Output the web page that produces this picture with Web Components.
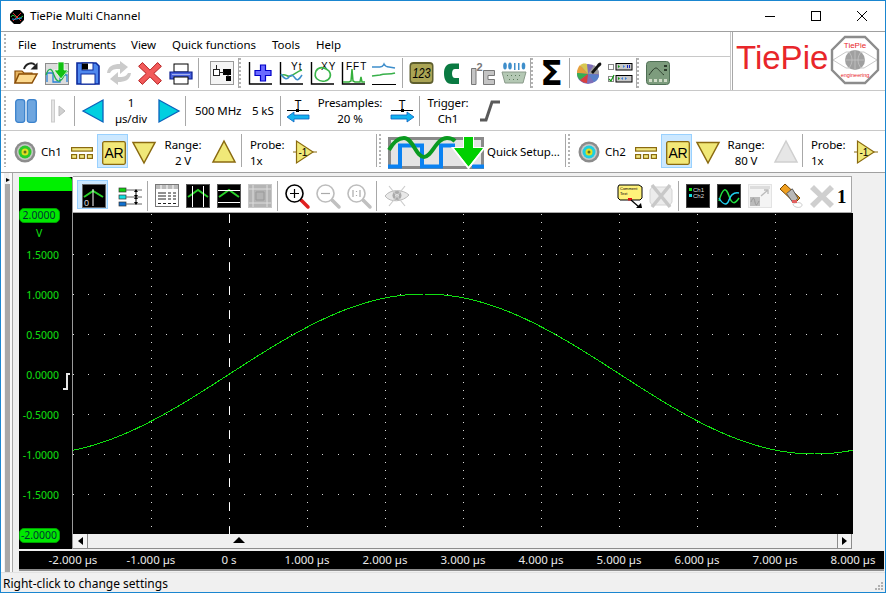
<!DOCTYPE html>
<html>
<head>
<meta charset="utf-8">
<title>TiePie Multi Channel</title>
<style>
    html, body { margin: 0; padding: 0; background: #f0f0f0; }
    body { font: 11.5px/16px "Noto Sans", "Liberation Sans", sans-serif; color: #000; }
</style>
</head>
<body>
<tp-window>
    <tp-titlebar>TiePie Multi Channel</tp-titlebar>
    <tp-header>
        <tp-menu slot="menu">
            <span style="width:34px">File</span><span style="width:79px;letter-spacing:-.25px">Instruments</span><span style="width:41px">View</span><span style="width:100px">Quick functions</span><span style="width:44px">Tools</span><span>Help</span>
        </tp-menu>
        <tp-row slot="tools" h="33" style="padding-bottom:1px">
            <tp-grip></tp-grip>
            <tp-tools style="margin-left:8px">
                <tp-icon name="open"></tp-icon><tp-icon name="load"></tp-icon><tp-icon name="save"></tp-icon><tp-icon name="refresh"></tp-icon><tp-icon name="cross"></tp-icon><tp-icon name="print"></tp-icon>
            </tp-tools>
            <tp-sep style="margin-left:5px"></tp-sep>
            <tp-icon name="tree" style="margin-left:11px"></tp-icon>
            <tp-sep style="margin-left:4px"></tp-sep>
            <tp-grip></tp-grip>
            <tp-tools style="margin-left:7px">
                <tp-icon name="plus"></tp-icon><tp-icon name="yt"></tp-icon><tp-icon name="xy"></tp-icon><tp-icon name="fft"></tp-icon><tp-icon name="meas"></tp-icon>
            </tp-tools>
            <tp-sep style="margin-left:6px"></tp-sep>
            <tp-tools style="margin-left:6px">
                <tp-icon name="digits"></tp-icon><tp-icon name="can"></tp-icon><tp-icon name="i2c"></tp-icon><tp-icon name="serial"></tp-icon>
            </tp-tools>
            <tp-sep style="margin-left:4px"></tp-sep>
            <tp-grip></tp-grip>
            <tp-icon name="sigma" style="margin-left:7px"></tp-icon>
            <tp-sep style="margin-left:5px"></tp-sep>
            <tp-tools style="margin-left:7px">
                <tp-icon name="palette"></tp-icon><tp-icon name="checks"></tp-icon>
            </tp-tools>
            <tp-sep style="margin-left:4px"></tp-sep>
            <tp-grip></tp-grip>
            <tp-icon name="panel" style="margin-left:7px"></tp-icon>
        </tp-row>
    </tp-header>

    <tp-row h="40" line style="padding-top:1px">
        <tp-grip></tp-grip>
        <tp-icon name="pause" w="22" style="margin-left:9px"></tp-icon>
        <tp-icon name="step" w="14" style="margin-left:14px"></tp-icon>
        <tp-sep style="margin-left:9px"></tp-sep>
        <tp-icon name="left" w="22" style="margin-left:7px"></tp-icon>
        <tp-field w="54" center><span>1</span><span>µs/div</span></tp-field>
        <tp-icon name="right" w="22"></tp-icon>
        <tp-sep style="margin-left:5px"></tp-sep>
        <tp-field w="50" style="margin-left:9px"><span>500 MHz</span></tp-field>
        <tp-field w="24" style="margin-left:7px"><span>5 kS</span></tp-field>
        <tp-sep style="margin-left:4px"></tp-sep>
        <tp-icon name="tleft" style="margin-left:6px"></tp-icon>
        <tp-field w="66" center style="margin-left:6px"><span>Presamples:</span><span>20 %</span></tp-field>
        <tp-icon name="tright" style="margin-left:7px"></tp-icon>
        <tp-sep style="margin-left:5px"></tp-sep>
        <tp-field w="40" center style="margin-left:8px"><span>Trigger:</span><span>Ch1</span></tp-field>
        <tp-icon name="slope" w="22" style="margin-left:11px"></tp-icon>
    </tp-row>

    <tp-row h="42" line style="padding-top:3px;--sep-h:33px;--sep-mb:5px">
        <tp-grip></tp-grip>
        <tp-icon name="bnc1" w="22" style="margin-left:8px"></tp-icon>
        <tp-field w="21" style="margin-left:5px;margin-bottom:2px"><span>Ch1</span></tp-field>
        <tp-icon name="bars" w="22" style="margin-left:9px"></tp-icon>
        <tp-hot style="margin-left:4px;margin-bottom:4px"><tp-icon name="ar"></tp-icon></tp-hot>
        <tp-icon name="down" style="margin-left:4px"></tp-icon>
        <tp-field w="38" center style="margin-left:8px"><span>Range:</span><span>2 V</span></tp-field>
        <tp-icon name="up" style="margin-left:10px"></tp-icon>
        <tp-sep style="margin-left:5px"></tp-sep>
        <tp-field w="36" style="margin-left:8px"><span>Probe:</span><span>1x</span></tp-field>
        <tp-icon name="probe" style="margin-left:7px"></tp-icon>
        <tp-sep style="margin-left:59px"></tp-sep>
        <tp-grip style="margin-left:2px"></tp-grip>
        <tp-icon name="quick" w="96" h="32" style="margin-left:7px"></tp-icon>
        <tp-field w="76" style="margin-left:3px;margin-bottom:2px"><span>Quick Setup...</span></tp-field>
        <tp-sep style="margin-left:2px"></tp-sep>
        <tp-grip style="margin-left:2px"></tp-grip>
        <tp-icon name="bnc2" w="22" style="margin-left:8px"></tp-icon>
        <tp-field w="21" style="margin-left:5px;margin-bottom:2px"><span>Ch2</span></tp-field>
        <tp-icon name="bars" w="22" style="margin-left:9px"></tp-icon>
        <tp-hot style="margin-left:4px;margin-bottom:4px"><tp-icon name="ar"></tp-icon></tp-hot>
        <tp-icon name="down" style="margin-left:4px"></tp-icon>
        <tp-field w="38" center style="margin-left:7px"><span>Range:</span><span>80 V</span></tp-field>
        <tp-icon name="upoff" style="margin-left:9px"></tp-icon>
        <tp-sep style="margin-left:4px"></tp-sep>
        <tp-field w="36" style="margin-left:8px"><span>Probe:</span><span>1x</span></tp-field>
        <tp-icon name="probe" style="margin-left:7px"></tp-icon>
    </tp-row>

    <tp-main>
        <tp-splitter slot="strip"></tp-splitter>
        <tp-scope>
            <tp-yaxis slot="yaxis"></tp-yaxis>
            <tp-scopebar slot="bar">
                <tp-hot style="margin-left:4px;align-self:flex-start;--hot-h:29px;--hot-pb:0px"><tp-icon name="tzero"></tp-icon></tp-hot>
                <tp-icon name="legend" style="margin-left:10px"></tp-icon>
                <tp-sep style="margin-left:5px"></tp-sep>
                <tp-tools style="margin-left:7px">
                    <tp-icon name="table"></tp-icon><tp-icon name="vcur"></tp-icon><tp-icon name="hcur"></tp-icon><tp-icon name="fit"></tp-icon>
                </tp-tools>
                <tp-sep style="margin-left:5px"></tp-sep>
                <tp-tools style="margin-left:7px">
                    <tp-icon name="zoomin"></tp-icon><tp-icon name="zoomout"></tp-icon><tp-icon name="zoomone"></tp-icon>
                </tp-tools>
                <tp-sep style="margin-left:5px"></tp-sep>
                <tp-icon name="eye" style="margin-left:8px"></tp-icon>
                <tp-icon name="comment" style="margin-left:auto"></tp-icon>
                <tp-icon name="nocomment" style="margin-left:7px"></tp-icon>
                <tp-sep style="margin-left:5px"></tp-sep>
                <tp-tools style="margin-left:7px">
                    <tp-icon name="chans"></tp-icon><tp-icon name="waves"></tp-icon><tp-icon name="popout"></tp-icon><tp-icon name="eraser"></tp-icon><tp-icon name="grayx"></tp-icon>
                </tp-tools>
                <tp-tag>1</tp-tag>
            </tp-scopebar>
            <tp-plot slot="plot"></tp-plot>
            <tp-scroll slot="scroll"></tp-scroll>
            <tp-xaxis slot="xaxis"></tp-xaxis>
        </tp-scope>
    </tp-main>
    <tp-status>Right-click to change settings</tp-status>
</tp-window>

<script>
const FRAME = '<path d="M1.5 1v22H24" fill="none" stroke="#000" stroke-width="1.4"/>';
const TINY = 'font-family="Liberation Sans"';

// all drawn on a 24 box unless the tag says otherwise
const ICONS = {
    open: `<path d="M1 22V10h7l2 2h8v3" fill="#e6b562" stroke="#8a4d06" stroke-width="1.2"/><path d="M1 22l4-9h18l-5 9z" fill="#fcd98e" stroke="#8a4d06" stroke-width="1.5"/><path d="M10 8C12 2 18 1 21 4" fill="none" stroke="#222" stroke-width="2"/><path d="M23.5 1.500v7h-7z" fill="#222"/>`,
    load: `<rect x=".5" y="2.500" width="23" height="21" fill="#dcdcdc" stroke="#8c8c8c"/><path d="M2 21v-9h6v9h7v-7h7v7" fill="none" stroke="#2a80d8" stroke-width="1.300"/><path d="M1 14C4 5 7 8 9 14s5 8 8 4 3-7 6-8" fill="none" stroke="#20b050" stroke-width="1.300"/><path d="M13 1h6v8h4l-7 9-7-9h4z" fill="#12c012" stroke="#fff" stroke-width=".7"/>`,
    save: `<path d="M1 2h19l3 3v18H1z" fill="#4f88ee" stroke="#0c2a9c" stroke-width="1.600"/><rect x="6" y="2" width="11" height="7" fill="#fff" stroke="#0c2a9c"/><rect x="6" y="2.500" width="6" height="6" fill="#000"/><rect x="5" y="13" width="14" height="10" fill="#fff" stroke="#0c2a9c"/>`,
    refresh: `<path d="M0 12C1 5 6 3 13 3V0l8 6-8 7V8C8 8 5 8 3 12zM24 12c-1 7-6 9-13 9v3l-8-6 8-7v5c5 0 8 0 10-4z" fill="#cbcbcb"/>`,
    cross: `<path d="M4 1l8 8 8-8 4 4-8 7.500 8 7.500-4 4-8-8-8 8-4-4 8-7.500L0 5z" fill="#f25a5a" stroke="#b01818" transform="translate(.6 .6) scale(.95)"/>`,
    print: `<rect x="5" y="3" width="14" height="8" fill="#fff" stroke="#000"/><path d="M1 11h22v7H1z" fill="#4a62dc" stroke="#0b1f90" stroke-width="1.200"/><rect x="5" y="16" width="14" height="7" fill="#fff" stroke="#000"/><rect x="3" y="13" width="18" height="1" fill="#fff" opacity=".5"/>`,
    tree: `<rect x=".5" y=".5" width="23" height="23" fill="#f4f4f4" stroke="#999"/><rect x="3.500" y="8.500" width="6" height="6" fill="#fff" stroke="#222"/><rect x="13" y="8" width="8" height="6" fill="#000"/><rect x="16" y="15" width="5" height="5" fill="#000"/><path d="M9 11.500h5M6.500 4v4M18 14v2" stroke="#222"/>`,
    plus: `${FRAME}<path d="M12.500 4h5v5.500H23v5h-5.500V20h-5v-5.500H7v-5h5.500z" fill="#6a6aff" stroke="#0000c8" stroke-width="1.200"/>`,
    yt: `${FRAME}<text x="12" y="9" font-size="10" ${TINY} letter-spacing="1">Yt</text><path d="M2 15c4-4 6 2 10 0s7-5 11-6" fill="none" stroke="#3cb04a" stroke-width="1.500"/><path d="M2 13c3 5 6 6 8 3s4-2 6 1 4 2 7-3" fill="none" stroke="#3e8ecb" stroke-width="1.500"/>`,
    xy: `${FRAME}<text x="11" y="9" font-size="10" ${TINY} letter-spacing="1">XY</text><path d="M6 10c3-5 9-4 13 0 3 4 1 9-4 10-6 1-12-3-9-10z" fill="none" stroke="#3ab54a" stroke-width="1.600"/>`,
    fft: `${FRAME}<text x="5" y="9" font-size="10" ${TINY} letter-spacing="1">FFT</text><path d="M2 21h6l2-1 1-12 1 12 2 1h5l1-5 1 5h3" fill="none" stroke="#36b03c" stroke-width="1.500"/>`,
    meas: `<path d="M0 6h8c3 0 3-1 4-3 1 2 2 3 5 3l6 1" fill="none" stroke="#3e8ecb" stroke-width="1.500"/><path d="M0 15l8-1c5-2 9 0 15-2" fill="none" stroke="#38b04a" stroke-width="1.500"/><path d="M0 23.500h24" stroke="#000"/>`,
    digits: `<rect x=".5" y="1" width="24" height="22" rx="4" fill="#5e5e2e"/><rect x="2" y="3" width="21" height="18" rx="2" fill="#aaa454"/><text x="12.500" y="17" text-anchor="middle" font-size="14" font-style="italic" ${TINY} textLength="18" lengthAdjust="spacingAndGlyphs">123</text>`,
    can: `<path d="M19 2.500h-7C6 2.500 4 7 4 12.500S6 23 12 23h7v-6h-4c-2 0-3-2-3-4.500s1-4.500 3-4.500h4z" fill="#0a7a42"/>`,
    i2c: `<path d="M.5 7.500h4.500v16H.5zM12.500 9.500h11v5h-6.500v4h6.500v5h-11z" fill="#c4c4c4" stroke="#777"/><text x="5.500" y="10" font-size="11" font-weight="bold" fill="#777" ${TINY}>2</text>`,
    serial: `<g fill="#3e8ecb"><ellipse cx="3" cy="5" rx="1.800" ry="3.500"/><ellipse cx="8" cy="5" rx="1.800" ry="3.500"/><rect x="12" y="2" width="1.500" height="7"/><rect x="16" y="2" width="1.500" height="7"/><ellipse cx="21.500" cy="5" rx="1.800" ry="3.500"/></g><path d="M0 11h24l-3 11H3z" fill="#b4c8b4" stroke="#8a9a8a"/><g fill="#5a7a5a"><rect x="5" y="14" width="1" height="1"/><rect x="9" y="14" width="1" height="1"/><rect x="13" y="14" width="1" height="1"/><rect x="17" y="14" width="1" height="1"/><rect x="7" y="18" width="1" height="1"/><rect x="11" y="18" width="1" height="1"/><rect x="15" y="18" width="1" height="1"/></g>`,
    sigma: `<text x="11.500" y="24" text-anchor="middle" font-size="33" font-weight="bold" font-family="DejaVu Sans">Σ</text>`,
    palette: `<ellipse cx="11" cy="13" rx="11" ry="10" fill="#7e6eb8"/><path d="M11 13L3 4C1 6 0 9 0 12z" fill="#e6a03c"/><path d="M11 13L0 12c0 3 1 5 3 7z" fill="#36b050"/><path d="M11 13l-8 6c2 2 4 3 7 3z" fill="#d84040"/><path d="M11 13L3 4c2-1 4-2 7-1z" fill="#d8c850"/><path d="M11 13l11 1c0 3-2 6-5 7z" fill="#5880c8"/><path d="M11 13l6-9c3 2 5 5 5 9z" fill="#9a9a9a"/><path d="M14 11l6-7c1-2 3-3 4-2s0 3-2 4l-6 7z" fill="#111"/>`,
    checks: `<rect x=".5" y="3.500" width="5" height="5" fill="#fff" stroke="#888"/><rect x="8" y="2.500" width="16" height="6.500" fill="#c8c8c8" stroke="#000"/><rect x=".5" y="15.500" width="5" height="5" fill="#fff" stroke="#888"/><path d="M1 18l2 2 3-6" fill="none" stroke="#119a11" stroke-width="1.200"/><rect x="8" y="14.500" width="16" height="6.500" fill="#c8c8c8" stroke="#000"/><path d="M10 4v3l2-1.500z" fill="#119a11"/><path d="M15 4v3l2-1.500z" fill="#3a80e0"/><rect x="19" y="4" width="1" height="3" fill="#1020c0"/><rect x="21" y="4" width="1" height="3" fill="#1020c0"/><path d="M10 16v3l2-1.500z" fill="#119a11"/><path d="M15 16v3l-2-1.500zM17 16v3l2-1.500z" fill="#3a80e0"/>`,
    panel: `<rect x=".5" y=".5" width="23" height="23" rx="3" fill="#7d9c7d" stroke="#4f6f55"/><path d="M3 14c3-4 5-7 7-7s4 4 8 7" fill="none" stroke="#2c3c2c"/><rect x="18" y="4" width="3" height="2" fill="#2c3c2c"/><rect x="18" y="8" width="3" height="2" fill="#2c3c2c"/><g fill="#d0dcc8"><rect x="3" y="18" width="3" height="3"/><rect x="8" y="18" width="3" height="3"/><rect x="13" y="18" width="3" height="3"/><rect x="18" y="18" width="3" height="3"/></g>`,

    pause: `<rect x=".7" y=".7" width="9" height="22.600" rx="2.500" fill="#6fa6df" stroke="#3b82cc" stroke-width="1.300"/><rect x="12.300" y=".7" width="9" height="22.600" rx="2.500" fill="#6fa6df" stroke="#3b82cc" stroke-width="1.300"/>`,
    step: `<rect x=".5" y="1" width="3" height="22" fill="#e4e4e4" stroke="#ccc"/><path d="M8 7v10l6-5z" fill="#d0d0d0" stroke="#bbb"/>`,
    left: `<path d="M1 12L21 1v22z" fill="#00cfe0" stroke="#0a62bc" stroke-width="1.300"/>`,
    right: `<path d="M21 12L1 1v22z" fill="#00cfe0" stroke="#0a62bc" stroke-width="1.300"/>`,
    tleft: `<text x="11" y="10" text-anchor="middle" font-size="12" font-family="Noto Sans">T</text><path d="M0 11.500h22" stroke="#000"/><rect x="9" y="10" width="3" height="3" fill="#000"/><path d="M0 18l7-5v3h15v4H7v3z" fill="#14b4f0" stroke="#0a60c0" stroke-width=".8"/>`,
    tright: `<text x="12" y="10" text-anchor="middle" font-size="12" font-family="Noto Sans">T</text><path d="M1 11.500h22" stroke="#000"/><rect x="11" y="10" width="3" height="3" fill="#000"/><path d="M24 18l-7-5v3H1v4h16v3z" fill="#14b4f0" stroke="#0a60c0" stroke-width=".8"/>`,
    slope: `<path d="M1 21h6l6-18h8" fill="none" stroke="#5a5a5a" stroke-width="3"/>`,

    bnc1: `<circle cx="11" cy="11" r="10.500" fill="#8c8c8c"/><circle cx="11" cy="11" r="8" fill="#c8c8c8"/><circle cx="11" cy="11" r="6.500" fill="#2cc82c"/><circle cx="11" cy="11" r="3.500" fill="#e0e020"/><circle cx="11" cy="11" r="1.500" fill="#607020"/>`,
    bnc2: `<circle cx="11" cy="11" r="10.500" fill="#8c8c8c"/><circle cx="11" cy="11" r="8" fill="#c8c8c8"/><circle cx="11" cy="11" r="6.500" fill="#1ecfe0"/><circle cx="11" cy="11" r="3.500" fill="#e0e020"/><circle cx="11" cy="11" r="1.500" fill="#607020"/>`,
    bars: `<g fill="#f2e884" stroke="#8a6a10" stroke-width="1.200"><rect x=".6" y="6.600" width="20.800" height="3.500"/><rect x=".6" y="13.600" width="5" height="3.800"/><rect x="8.500" y="13.600" width="5" height="3.800"/><rect x="16.400" y="13.600" width="5" height="3.800"/></g>`,
    ar: `<rect x=".7" y=".7" width="22.600" height="22.600" rx="1.500" fill="#f2e878" stroke="#8a6a10" stroke-width="1.300"/><text x="12" y="17" text-anchor="middle" font-size="14" font-family="Liberation Sans">AR</text>`,
    down: `<path d="M1 1.500h22L12 22z" fill="#f0e878" stroke="#8a6a10" stroke-width="1.500"/>`,
    up: `<path d="M1 21h22L12 0z" fill="#f0e878" stroke="#8a6a10" stroke-width="1.500"/>`,
    upoff: `<path d="M1 21h22L12 0z" fill="#e6e6e6" stroke="#cfcfcf" stroke-width="1.500"/>`,
    probe: `<path d="M0 11h4M19 11h5" stroke="#8a6a10"/><path d="M3.500 0v22L20 11z" fill="#f0e878" stroke="#8a6a10" stroke-width="1.200"/><text x="5.500" y="14.500" font-size="10" ${TINY}>-1</text>`,
    quick: `<rect x="1.500" y="1.500" width="93" height="29" fill="#e4e4e4" stroke="#8a8a8a" stroke-width="3"/><path d="M0 29.500h12V8.500h22v21h19V8.500h14" fill="none" stroke="#0a82f2" stroke-width="4"/><path d="M84 29.500h12" fill="none" stroke="#0a82f2" stroke-width="4"/><path d="M1 13C6 4 11 1 16 1c9 0 12 19 20 19s12-19 23-19c3 0 6 1 8 3" fill="none" stroke="#0a9a20" stroke-width="4"/><path d="M76 0h9v11h11L80.500 31 65 11h11z" fill="#00d000" stroke="#fff" stroke-width="2"/><path d="M76 0h9v11h10L80.500 29 66 11h10z" fill="#00d000"/>`,

    tzero: `<rect x=".5" y=".5" width="23" height="23" fill="#000" stroke="#666"/><path d="M2 13l9-6 10 6" fill="none" stroke="#2ad02a" stroke-width="2"/><path d="M11 5v17" stroke="#fff"/><text x="2" y="22" font-size="9" fill="#ddd" ${TINY}>0</text>`,
    legend: `<g stroke="#333" stroke-width=".7"><rect x="1" y="4" width="7" height="4" fill="#10d010"/><rect x="1" y="11" width="7" height="4" fill="#10e0e0"/><rect x="1" y="18" width="7" height="4" fill="#1070d0"/></g><path d="M8 6h16M8 13h16M8 20h16" stroke="#666"/><path d="M18 6v14" stroke="#000"/><path d="M16 8h4l-2-3zM16 11h4l-2 3zM16 15h4l-2-3zM16 18h4l-2 3z" fill="#000"/>`,
    table: `<rect x=".5" y=".5" width="23" height="22" fill="#fff" stroke="#777"/><rect x="1" y="1" width="22" height="4" fill="#bbb"/><path d="M6 1v4M12 1v4M18 1v4" stroke="#fff"/><path d="M3 9h8M13 9h3M18 9h3M3 12h8M13 12h3M18 12h3M3 15h8M13 15h3M18 15h3" stroke="#222"/><path d="M3 19.500h3M8 19.500h3M13 19.500h3M18 19.500h3" stroke="#222"/>`,
    vcur: `<rect x=".5" y=".5" width="23" height="23" fill="#000" stroke="#555"/><path d="M2 13l10-7 10 7" fill="none" stroke="#2ad02a" stroke-width="2"/><path d="M6.500 2v21M17.500 2v21" stroke="#fff"/>`,
    hcur: `<rect x=".5" y=".5" width="23" height="23" fill="#000" stroke="#555"/><path d="M2 13l10-7 10 7" fill="none" stroke="#2ad02a" stroke-width="2"/><path d="M1 6.500h22M1 18.500h22" stroke="#fff"/>`,
    fit: `<rect x=".5" y=".5" width="23" height="23" fill="#b4b4b4" stroke="#c8c8c8"/><path d="M5 1v22M19 1v22M1 5h22M1 19h22" stroke="#ddd"/><path d="M8 8h8v8H8z" fill="none" stroke="#999"/>`,
    zoomin: `<path d="M16 16l7 7" stroke="#e02020" stroke-width="3.500" stroke-linecap="round"/><circle cx="9.500" cy="9.500" r="8.500" fill="#fff" stroke="#000" stroke-width="1.600"/><path d="M5 9.500h9M9.500 5v9" stroke="#000" stroke-width="1.200"/>`,
    zoomout: `<path d="M16 16l7 7" stroke="#c0c0c0" stroke-width="3.500" stroke-linecap="round"/><circle cx="9.500" cy="9.500" r="8.500" fill="#fff" stroke="#bdbdbd" stroke-width="1.600"/><path d="M5 9.500h9" stroke="#aaa" stroke-width="1.200"/>`,
    zoomone: `<path d="M16 16l7 7" stroke="#c0c0c0" stroke-width="3.500" stroke-linecap="round"/><circle cx="9.500" cy="9.500" r="8.500" fill="#fff" stroke="#bdbdbd" stroke-width="1.600"/><path d="M6 6v7M9.500 7v1M9.500 11v1M13 6v7" stroke="#aaa" stroke-width="1.200"/>`,
    eye: `<path d="M0 12C5 5 18 5 24 11 18 18 5 19 0 12z" fill="#e8e8e8" stroke="#bbb"/><circle cx="12" cy="11.500" r="4.500" fill="#aaa"/><circle cx="12" cy="11.500" r="1.800" fill="#eee"/><path d="M4 2l16 20M20 2L4 22" stroke="#ccc" stroke-width="1.200"/>`,
    comment: `<path d="M1 1h20l3 2v11l-2 2H2l-2-2V3z" fill="#fff27a" stroke="#000"/><text x="2" y="6" font-size="4" ${TINY}>Comment</text><text x="2" y="11" font-size="4" ${TINY}>Text</text><rect x="10" y="14" width="4" height="2.500" fill="#e01010"/><path d="M13 16l8 7" stroke="#000" stroke-width="1.200"/><path d="M24 24h-6l5-5z" fill="#000"/>`,
    nocomment: `<path d="M3 3h18l2 3v12l-2 3H3l-2-3V6z" fill="#ececec" stroke="#d4d4d4"/><path d="M3 1l18 22M21 1L3 23" stroke="#c8c8c8" stroke-width="3.500"/>`,
    chans: `<rect x=".5" y=".5" width="23" height="23" fill="#000" stroke="#444"/><rect x="3" y="4" width="3" height="3" fill="#10e010"/><rect x="3" y="10" width="3" height="3" fill="#10e0e0"/><text x="7" y="8" font-size="6" fill="#ddd" ${TINY}>Ch1</text><text x="7" y="14" font-size="6" fill="#ddd" ${TINY}>Ch2</text>`,
    waves: `<rect x=".5" y=".5" width="23" height="23" fill="#000" stroke="#444"/><path d="M2 17C6 3 9 3 12 12s6 8 10 2" fill="none" stroke="#20e040" stroke-width="1.500"/><path d="M2 14c4 7 8 8 10 2s5-8 10-7" fill="none" stroke="#20d0f0" stroke-width="1.500"/>`,
    popout: `<rect x=".5" y=".5" width="23" height="23" fill="#f4f4f4" stroke="#ccc" stroke-dasharray="1 1"/><rect x="2" y="2" width="20" height="3" fill="#ddd"/><rect x="2" y="13" width="10" height="9" fill="#bbb"/><path d="M3 18c2-5 3-5 4 0s2 3 4-1" fill="none" stroke="#999"/><path d="M13 12l7-6M16 6h4v4" fill="none" stroke="#bbb" stroke-width="1.300"/>`,
    eraser: `<path d="M1 5l5-5 15 14-5 5z" fill="#f0a020" stroke="#7a4800"/><path d="M9 9l6-5 6 10-5 5z" fill="#b8b8b8" stroke="#555" transform="translate(-1 1) scale(.95)"/><path d="M16 19c4-1 7 0 7 2s-3 3-6 2-4-3-1-4z" fill="#fff" stroke="#ccc"/><rect x="13" y="16" width="5" height="3" fill="#e06060"/>`,
    grayx: `<path d="M4 1l8 8 8-8 4 4-8 7.500 8 7.500-4 4-8-8-8 8-4-4 8-7.500L0 5z" fill="#cfcfcf"/>`
};

function define(name, css, html, setup) {
    customElements.define(name, class extends HTMLElement {
        constructor() {
            super();
            this.attachShadow({ mode: 'open' });
            this.shadowRoot.innerHTML = `<style>${css}</style>${html}`;
        }
        connectedCallback() {
            if (setup) setup(this, this.shadowRoot);
        }
    });
}

define('tp-window', `
    :host { display: flex; flex-direction: column; box-sizing: border-box; width: 886px; height: 593px; border: 1px solid #1a86d0; background: #f0f0f0; overflow: hidden; }
`, `<slot></slot>`);

define('tp-titlebar', `
    :host { display: flex; align-items: center; height: 30px; background: #fff; flex: none; }
    svg { display: block; }
    .logo { margin-left: 9px; margin-top: 1px; }
    .name { margin-left: 6px; flex: 1; }
    .btn { width: 46px; height: 30px; display: flex; align-items: center; justify-content: center; }
`, `
    <svg class="logo" width="14" height="14" viewBox="0 0 14 14"><path d="M4 0h6l4 4v6l-4 4H4l-4-4V4z" fill="#000"/><path d="M1 7c3-6 5 6 12-1" fill="none" stroke="#20d040"/><path d="M3 3l8 8M3 11l8-8" stroke="#e03030"/><path d="M2 9c4 1 6-1 10-1" fill="none" stroke="#20a0f0"/></svg>
    <span class="name"><slot></slot></span>
    <span class="btn"><svg width="10" height="10"><path d="M0 5.500h10" stroke="#000"/></svg></span>
    <span class="btn"><svg width="10" height="10"><rect x=".5" y=".5" width="9" height="9" fill="none" stroke="#000"/></svg></span>
    <span class="btn"><svg width="10" height="10"><path d="M0 0l10 10M10 0L0 10" stroke="#000"/></svg></span>
`);

define('tp-header', `
    :host { display: flex; flex: none; height: 58px; border-top: 1px solid #a0a0a0; background: #fff; }
    .left { width: 729px; display: flex; flex-direction: column; border-right: 1px solid #c8c8c8; }
    .logo { flex: 1; margin-left: 1px; border-left: 1px solid #a8a8a8; display: flex; align-items: center; background: #fff; }
    .word { color: #e8262a; font: 33px/1 "Liberation Sans", sans-serif; margin-left: 3px; margin-top: -7px; }
    svg { display: block; margin-left: 2px; margin-top: -2px; }
`, `
    <div class="left"><slot name="menu"></slot><slot name="tools"></slot></div>
    <div class="logo">
        <span class="word">TiePie</span>
        <svg width="50" height="50" viewBox="0 0 50 50">
            <path d="M15 2h20l13 13v20L35 48H15L2 35V15z" fill="#fff" stroke="#8c8c8c" stroke-width="2.400"/>
            <path d="M3 25L16 17h18l13 8-13 8H16z" fill="none" stroke="#b0b0b0" stroke-width=".7"/>
            <circle cx="25" cy="25" r="10" fill="#a0a0a0"/>
            <path d="M15 25h20M25 15v20M19 17c4 5 4 11 0 16M31 17c-4 5-4 11 0 16" stroke="#c8c8c8" fill="none" stroke-width=".7"/>
            <text x="25" y="13" text-anchor="middle" font-size="8" fill="#e8262a" font-family="Liberation Sans">TiePie</text>
            <text x="25" y="42" text-anchor="middle" font-size="5.500" fill="#e8262a" font-family="Liberation Sans">engineering</text>
        </svg>
    </div>
`);

define('tp-menu', `
    :host { display: flex; align-items: center; height: 24px; flex: none; padding-left: 3px; border-bottom: 1px solid #c8c8c8; background: #fff; }
    .grip { width: 2px; height: 20px; background: repeating-linear-gradient(#b4b4b4 0 2px, transparent 2px 4px); }
    .items { display: flex; margin-left: 12px; margin-top: 1px; }
    ::slotted(span) { display: block; flex: none; white-space: nowrap; }
`, `<div class="grip"></div><div class="items"><slot></slot></div>`);

define('tp-row', `
    :host { display: flex; align-items: center; flex: none; box-sizing: border-box; background: #fff; padding-left: 3px; white-space: nowrap; letter-spacing: -.1px; }
    :host([line]) { border-top: 1px solid #c8c8c8; }
`, `<slot></slot>`, (el) => { el.style.height = el.getAttribute('h') + 'px'; });

define('tp-tools', `:host { display: flex; align-items: center; gap: 7px; flex: none; }`, `<slot></slot>`);

define('tp-grip', `
    :host { display: block; flex: none; width: 2px; height: var(--sep-h, 30px); margin-bottom: var(--sep-mb, 0); background: repeating-linear-gradient(#b4b4b4 0 2px, transparent 2px 4px); }
`, ``);

define('tp-sep', `
    :host { display: block; flex: none; width: 1px; height: var(--sep-h, 30px); margin-bottom: var(--sep-mb, 0); background: #a8a8a8; }
`, ``);

define('tp-icon', `
    :host { display: block; flex: none; line-height: 0; }
    svg { display: block; overflow: visible; }
`, ``, (el, root) => {
    const w = el.getAttribute('w') || 24;
    const h = el.getAttribute('h') || 24;
    root.innerHTML += `<svg width="${w}" height="${h}" viewBox="0 0 ${w} ${h}">${ICONS[el.getAttribute('name')] || ''}</svg>`;
});

define('tp-field', `
    :host { display: flex; flex-direction: column; flex: none; }
    :host([center]) { align-items: center; }
`, `<slot></slot>`, (el) => {
    el.style.width = el.getAttribute('w') + 'px';
});

define('tp-hot', `
    :host { display: flex; flex: none; align-items: flex-end; justify-content: flex-end; box-sizing: border-box; width: 31px; height: var(--hot-h, 34px); padding-right: 1px; padding-bottom: var(--hot-pb, 2px); background: #cce8ff; border: 1px solid #99d1ff; }
`, `<slot></slot>`);

define('tp-main', `
    :host { display: flex; flex: 1; min-height: 0; border-top: 1px solid #a0a0a0; background: #f0f0f0; }
`, `<slot name="strip"></slot><slot></slot>`);

define('tp-splitter', `
    :host { display: flex; flex: none; width: 18px; box-sizing: border-box; padding-left: 4px; background: linear-gradient(90deg, #fff 0 3px, #f0f0f0 3px 8px, #fafafa 8px 11px, #a8a8a8 11px 12px, #f0f0f0 12px); }
    .col { display: flex; flex-direction: column; width: 5px; padding-top: 5px; height: 396px; }
    .tri { width: 0; height: 0; margin-left: 1px; border-left: 4px solid #000; border-top: 2.5px solid transparent; border-bottom: 2.5px solid transparent; }
    .bar { flex: 1; margin-top: 2px; background: #a8a8a8; }
`, `<div class="col"><div class="tri"></div><div class="bar"></div></div>`);

define('tp-scope', `
    :host { display: grid; grid-template-columns: 54px 780px; grid-template-rows: 37px 321px 15px 18px; grid-template-areas: "y bar" "y plot" "y scroll" "x x"; padding-top: 3px; flex: none; align-self: flex-start; }
    .y { grid-area: y; }
    .bar { grid-area: bar; }
    .plot { grid-area: plot; }
    .scroll { grid-area: scroll; }
    .x { grid-area: x; margin-top: 2px; }
`, `
    <div class="y"><slot name="yaxis"></slot></div>
    <div class="bar"><slot name="bar"></slot></div>
    <div class="plot"><slot name="plot"></slot></div>
    <div class="scroll"><slot name="scroll"></slot></div>
    <div class="x"><slot name="xaxis"></slot></div>
`);

define('tp-yaxis', `
    :host { display: block; position: relative; box-sizing: border-box; height: 372px; margin-top: 1px; background: #000; border-right: 1px solid #9a9a9a; color: #10e010; font-size: 10.5px; }
    .top { height: 14px; background: #00f000; border-top-right-radius: 4px; }
    .ticks { display: grid; grid-auto-rows: 40px; padding-top: 4px; padding-right: 14px; text-align: right; }
    .tick { align-self: center; }
    .pill { justify-self: end; box-sizing: border-box; width: 41px; height: 15px; margin-right: -1px; padding-right: 1px; line-height: 13px; background: #00e800; border: 1px solid #00a000; border-radius: 5px; color: #033; text-align: center; }
    .unit { position: absolute; left: 17px; top: 48px; }
    svg { position: absolute; left: 43px; top: 195px; }
`, `<div class="top"></div><div class="ticks"></div><span class="unit">V</span>
    <svg width="9" height="19"><path d="M8 2H5v15H1" fill="none" stroke="#e6e6e6" stroke-width="2"/></svg>`, (el, root) => {
    const labels = ['2.0000', '1.5000', '1.0000', '0.5000', '0.0000', '-0.5000', '-1.0000', '-1.5000', '-2.0000'];
    root.querySelector('.ticks').innerHTML = labels.map((t, i) =>
        `<span class="tick${i === 0 || i === 8 ? ' pill' : ''}">${t}</span>`).join('');
});

define('tp-scopebar', `
    :host { display: flex; align-items: center; box-sizing: border-box; width: 779px; height: 37px; background: #fff; border-top: 1px solid #a8a8a8; border-bottom: 1px solid #a8a8a8; border-right: 1px solid #a8a8a8; padding-top: 3px; padding-right: 3px; }
`, `<slot></slot>`);

define('tp-tag', `
    :host { display: block; flex: none; width: 11px; margin-left: 3px; font: bold 19px/1 "Liberation Serif", serif; }
`, `<slot></slot>`);

define('tp-plot', `
    :host { display: block; background: #000; height: 321px; }
    svg { display: block; }
`, `<svg width="780" height="321" viewBox="73 213 780 321"></svg>`, (el, root) => {
    let dots = '';
    // vertical grid lines every division, a dot each 8px
    for (let k = 1; k < 10; k++) {
        const x = 73 + 78 * k;
        for (let y = 214; y < 534; y += 8) dots += `<rect x="${x}" y="${y}" width="1" height="1"/>`;
    }
    for (let k = 1; k < 8; k++) {
        const y = 214 + 40 * k;
        for (let i = 0; i < 50; i++) dots += `<rect x="${Math.floor(73 + 15.6 * i)}" y="${y}" width="1" height="1"/>`;
    }
    const pts = [];
    for (let x = 73; x <= 853; x += 1) {
        pts.push(x + ',' + (374 - 80 * Math.sin(2 * Math.PI * (x - 229.5) / 780)).toFixed(2));
    }
    root.querySelector('svg').innerHTML = `
        <g fill="#d8d8d8">${dots}</g>
        <path d="M229.500 215V534" stroke="#fff" stroke-dasharray="8 16"/>
        <polyline points="${pts.join(' ')}" fill="none" stroke="#10e010" shape-rendering="crispEdges"/>`;
});

define('tp-scroll', `
    :host { display: flex; height: 15px; width: 779px; box-sizing: border-box; background: #f0f0f0; border-bottom: 1px solid #8c8c8c; }
    .btn { flex: none; width: 15px; display: flex; align-items: center; justify-content: center; background: #f4f4f4; border-right: 1px solid #8c8c8c; box-sizing: border-box; }
    .btn.r { border-left: 1px solid #8c8c8c; }
    .track { flex: 1; display: flex; padding-left: 145px; padding-top: 3px; }
    .mark { width: 0; height: 0; border-left: 6px solid transparent; border-right: 6px solid transparent; border-bottom: 6px solid #000; }
    .l { width: 0; height: 0; border-right: 5px solid #000; border-top: 4px solid transparent; border-bottom: 4px solid transparent; }
    .g { width: 0; height: 0; border-left: 5px solid #000; border-top: 4px solid transparent; border-bottom: 4px solid transparent; }
`, `<div class="btn"><i class="l"></i></div><div class="track"><i class="mark"></i></div><div class="btn r"><i class="g"></i></div>`);

define('tp-xaxis', `
    :host { display: flex; box-sizing: border-box; width: 865px; height: 20px; padding-left: 15px; background: #000; color: #e8e8e8; border-bottom: 2px solid #8c8c8c; align-items: center; }
    span { flex: none; width: 78px; text-align: center; white-space: nowrap; }
`, ``, (el, root) => {
    const labels = ['-2.000 µs', '-1.000 µs', '0 s', '1.000 µs', '2.000 µs', '3.000 µs', '4.000 µs', '5.000 µs', '6.000 µs', '7.000 µs', '8.000 µs'];
    root.innerHTML += labels.map(t => `<span>${t}</span>`).join('');
});

define('tp-status', `
    :host { display: flex; align-items: center; flex: none; box-sizing: border-box; height: 20px; padding-left: 2px; padding-top: 3px; border-top: 1px solid #e2e2e2; background: #f0f0f0; position: relative; font-size: 12px; }
    svg { position: absolute; right: 1px; bottom: 1px; }
`, `<slot></slot><svg width="9" height="9"><g fill="#b0b0b0"><rect x="6" y="0" width="2" height="2"/><rect x="3" y="3" width="2" height="2"/><rect x="6" y="3" width="2" height="2"/><rect x="0" y="6" width="2" height="2"/><rect x="3" y="6" width="2" height="2"/><rect x="6" y="6" width="2" height="2"/></g></svg>`);
</script>
</body>
</html>
